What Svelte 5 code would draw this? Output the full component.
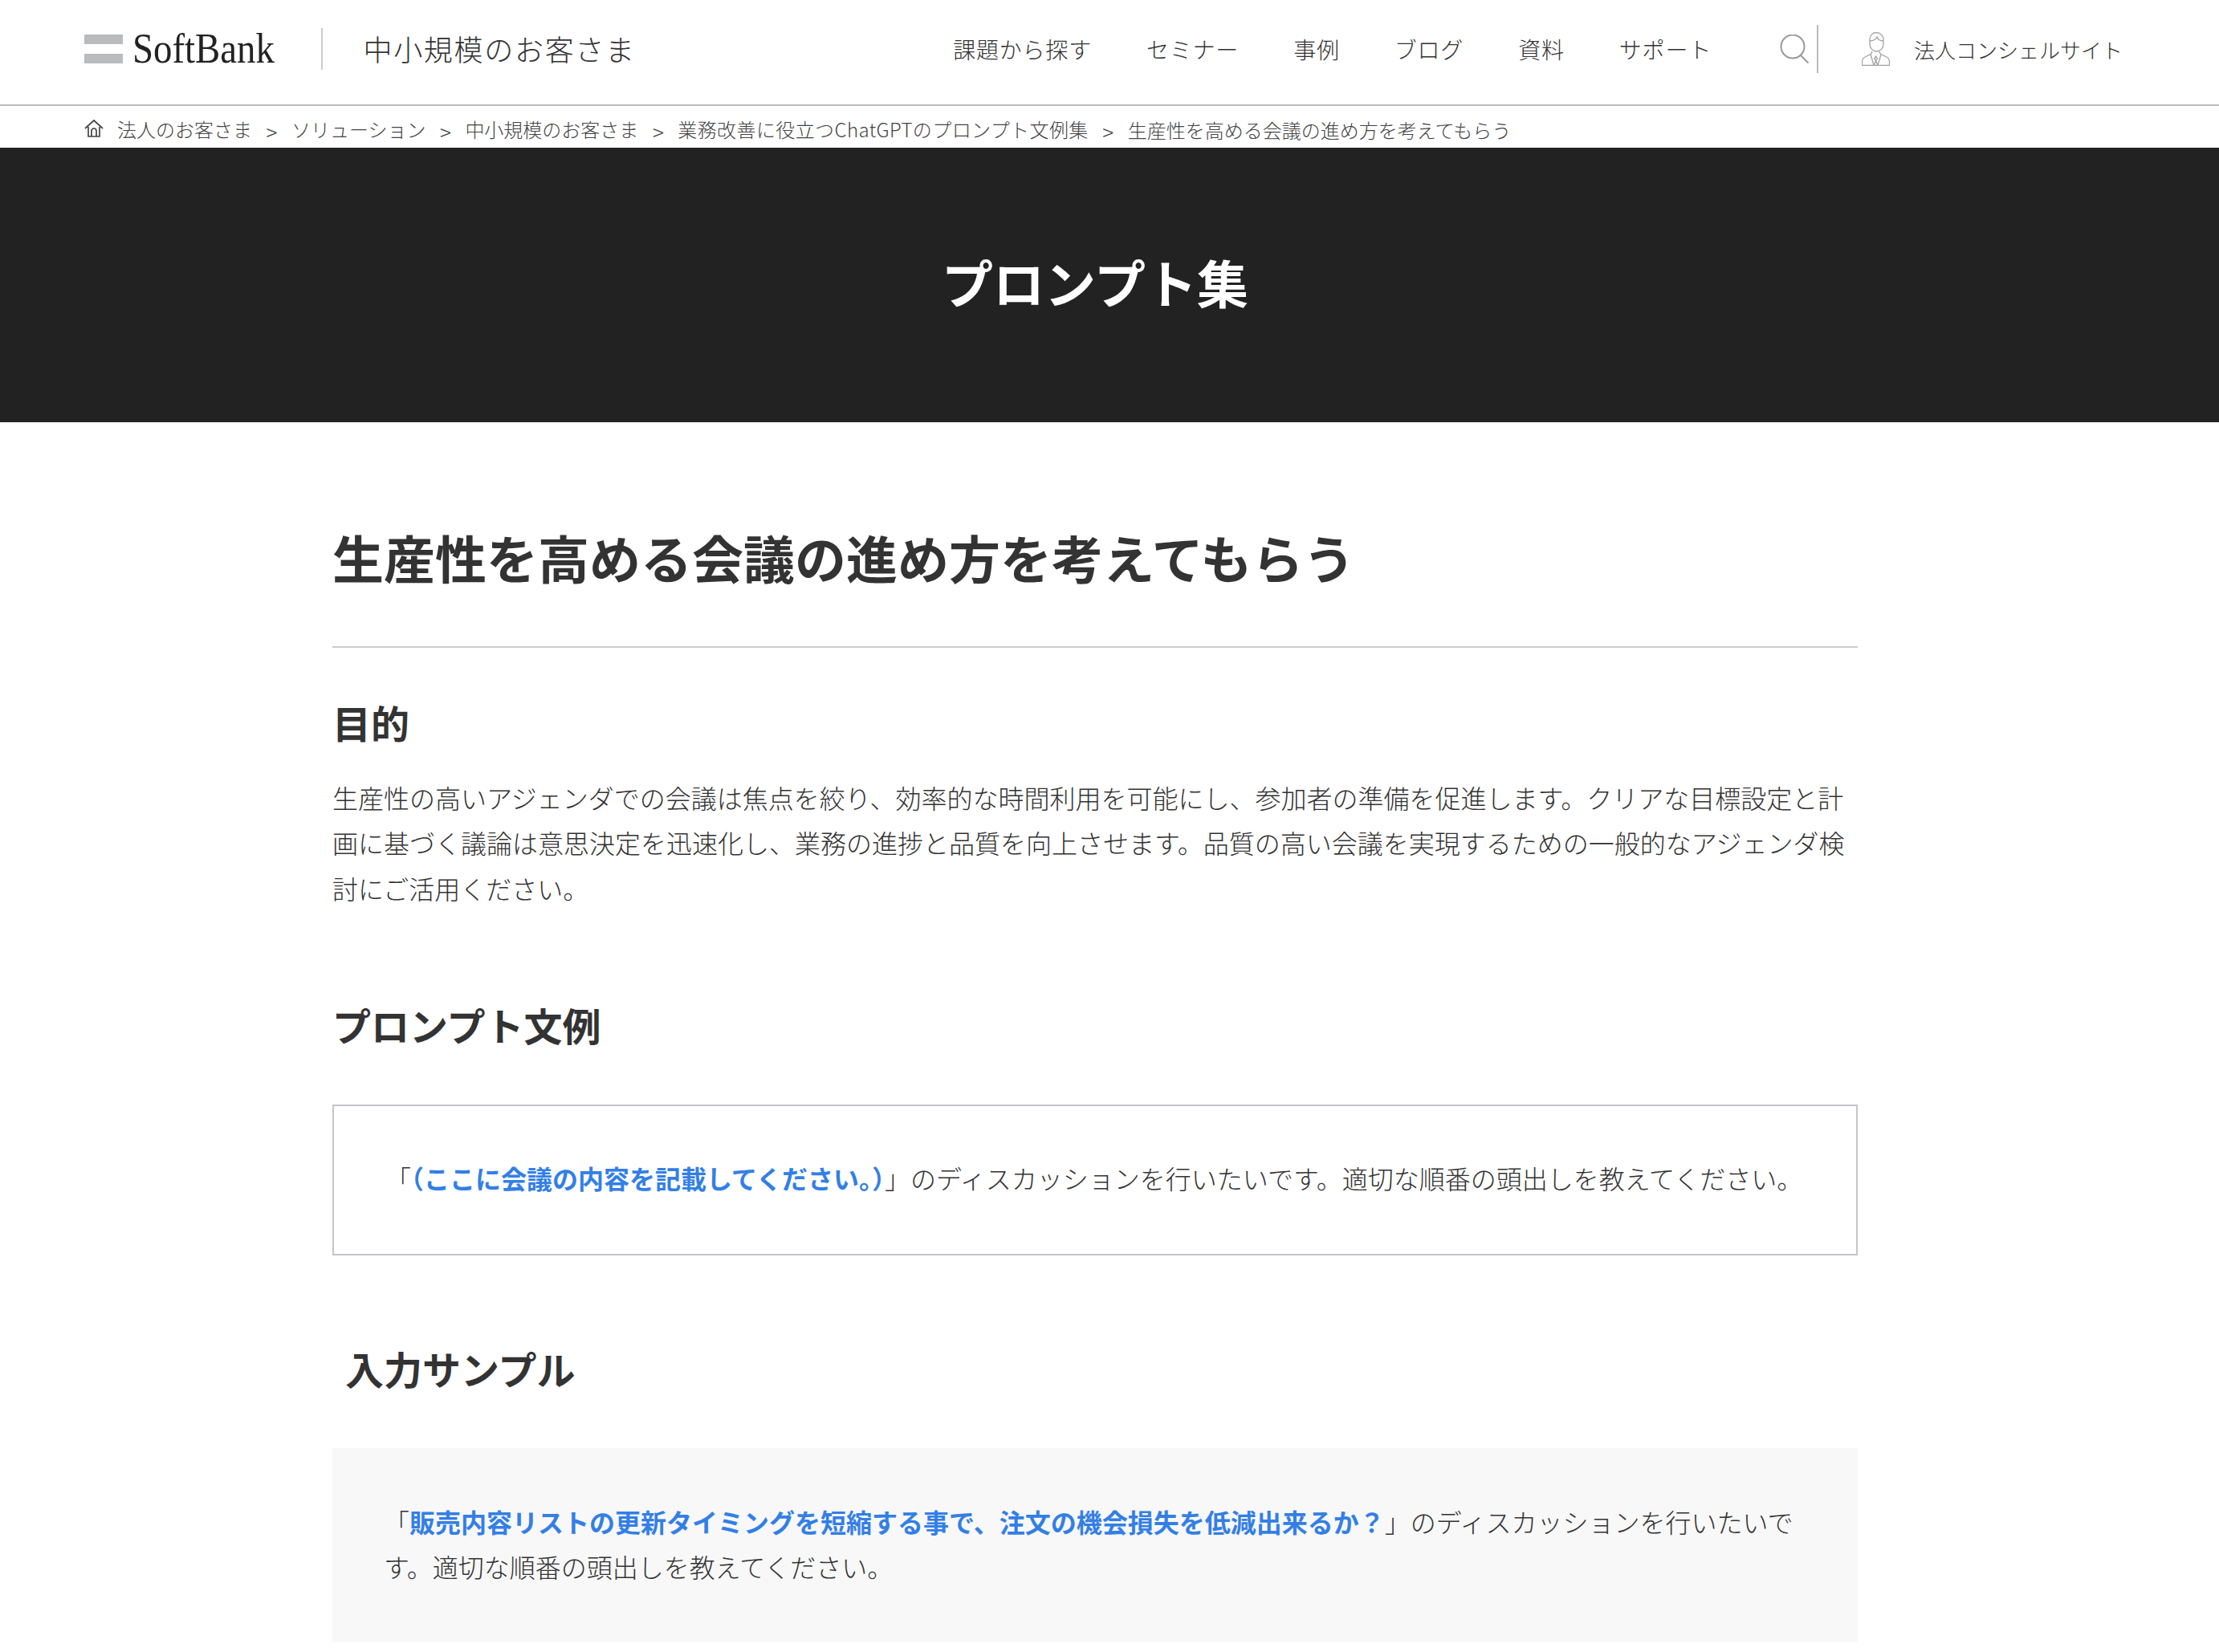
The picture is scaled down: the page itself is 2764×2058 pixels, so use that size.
<script lang="ts">
	const nav = ['課題から探す', 'セミナー', '事例', 'ブログ', '資料', 'サポート'];
	const crumbs = ['法人のお客さま', 'ソリューション', '中小規模のお客さま', '業務改善に役立つChatGPTのプロンプト文例集'];
</script>

<header class="site-header">
	<div class="brand">
		<a class="logo" href="#top">
			<span class="bars"><i></i><i></i></span>
			<span class="wordmark">SoftBank</span>
		</a>
		<span class="segment">中小規模のお客さま</span>
	</div>
	<nav class="global-nav">
		{#each nav as item}
			<a href="#top">{item}</a>
		{/each}
	</nav>
	<div class="tools">
		<button class="search" aria-label="検索">
			<svg width="37" height="36" viewBox="0 0 37 36" fill="none" stroke="#999" stroke-width="2">
				<circle cx="16" cy="15" r="14.5" />
				<path d="M26 26 35.500 35.500" />
			</svg>
		</button>
		<a class="concierge" href="#top">
			<svg width="35" height="42" viewBox="0 0 35 42" fill="none" stroke="#a3a3a3" stroke-width="1.3">
				<path d="M10 9c0-5 4-8.500 8-8.500S27 4 27 9v6c0 5-4 9-8.500 9S10 20 10 15z" />
				<path d="M10 11c3 0 7-1 9-5 1 3 4 5 8 5" />
				<path d="M13 24l-1 3-8 4c-2 1-3.500 3-3.500 6v4.500h34V37c0-3-1.500-5-3.500-6l-8-4-1-3" />
				<path d="M17.500 30l-2 3 2 2 2-2zM15.500 41l2-6 2 6M11 28l4 13M24 28l-4 13" />
			</svg>
			<span>法人コンシェルサイト</span>
		</a>
	</div>
</header>

<ol class="breadcrumb">
	<li class="home">
		<svg width="24" height="24" viewBox="0 0 24 24" fill="none" stroke="#444" stroke-width="1.7">
			<path d="M1 12 12 2l11 10M5 10v12h14V10M9 22v-7a3 3 0 0 1 6 0v7" />
		</svg>
	</li>
	{#each crumbs as crumb}
		<li><a href="#top">{crumb}</a><span class="sep">&gt;</span></li>
	{/each}
	<li class="current">生産性を高める会議の進め方を考えてもらう</li>
</ol>

<section class="hero">
	<p>プロンプト集</p>
</section>

<main class="content">
	<h1>生産性を高める会議の進め方を考えてもらう</h1>

	<h2 class="purpose">目的</h2>
	<p class="lead">生産性の高いアジェンダでの会議は焦点を絞り、効率的な時間利用を可能にし、参加者の準備を促進します。クリアな目標設定と計画に基づく議論は意思決定を迅速化し、業務の進捗と品質を向上させます。品質の高い会議を実現するための一般的なアジェンダ検討にご活用ください。</p>

	<h2 class="prompt-title">プロンプト文例</h2>
	<div class="box outlined">
		「<strong>（ここに会議の内容を記載してください。）</strong>」のディスカッションを行いたいです。適切な順番の頭出しを教えてください。
	</div>

	<h2 class="sample-title">入力サンプル</h2>
	<div class="box filled">
		「<strong>販売内容リストの更新タイミングを短縮する事で、注文の機会損失を低減出来るか？</strong>」のディスカッションを行いたいです。適切な順番の頭出しを教えてください。
	</div>
</main>

<style>
	:global(body) {
		margin: 0;
		background: #fff;
		color: #333;
		font-family: 'Noto Sans CJK JP', 'Noto Sans', sans-serif;
		font-weight: 300;
	}

	a {
		color: inherit;
		text-decoration: none;
	}

	.site-header {
		display: flex;
		align-items: center;
		height: 122px;
		padding: 0 120px 8px 105px;
		border-bottom: 2px solid #bbb;
		box-sizing: content-box;
	}

	.brand {
		display: flex;
		align-items: center;
	}

	.logo {
		display: flex;
		align-items: center;
		gap: 12px;
		padding-right: 58px;
		height: 52px;
		border-right: 2px solid #ccc;
	}

	.bars {
		display: flex;
		flex-direction: column;
		gap: 12px;
		width: 48px;
	}

	.bars i {
		display: block;
		height: 12px;
		background: #b9bbbd;
	}

	.wordmark {
		margin-right: -19px;
		font-family: 'Liberation Serif', serif;
		font-size: 52px;
		font-weight: 400;
		line-height: 52px;
		color: #222;
		transform: scaleX(0.9);
		transform-origin: left center;
	}

	.segment {
		margin: 0 0 2px 50px;
		font-size: 36px;
		letter-spacing: 1.7px;
		color: #333;
	}

	.global-nav {
		display: flex;
		gap: 68px;
		margin-left: auto;
		font-size: 28px;
		letter-spacing: 0.8px;
		color: #333;
	}

	.tools {
		display: flex;
		align-items: center;
		margin-left: 85px;
	}

	.search {
		display: flex;
		align-items: center;
		height: 60px;
		padding: 0 9px 0 0;
		background: none;
		border: 0;
		border-right: 2px solid #bbb;
	}

	.concierge {
		display: flex;
		align-items: center;
		gap: 30px;
		margin-left: 54px;
		font-size: 26px;
		color: #333;
	}

	.breadcrumb {
		display: flex;
		align-items: center;
		height: 52px;
		margin: 0;
		padding: 4px 0 0 105px;
		list-style: none;
		font-size: 24px;
		color: #444;
		box-sizing: border-box;
	}

	.breadcrumb li {
		display: flex;
		align-items: center;
	}

	.breadcrumb li:nth-child(5) a {
		letter-spacing: 0.4px;
	}

	.home {
		margin-right: 17px;
	}

	.sep {
		margin: 8px 17.5px 0;
		font-size: 26px;
		line-height: 26px;
	}

	.current {
		margin-top: 2px;
	}

	.hero {
		display: flex;
		align-items: center;
		justify-content: center;
		height: 342px;
		padding: 0 36px 10px 0;
		background: #222;
		box-sizing: border-box;
	}

	.hero p {
		margin: 0;
		font-size: 64px;
		font-weight: 700;
		color: #fff;
	}

	.content {
		width: 1900px;
		margin-left: 414px;
	}

	h1 {
		margin: 0;
		padding: 119px 0 64px;
		font-size: 64px;
		font-weight: 700;
		line-height: 96px;
		border-bottom: 2px solid #ccc;
	}

	h2 {
		margin: 0;
		font-size: 48px;
		font-weight: 700;
		line-height: 72px;
	}

	.purpose {
		margin-top: 56px;
	}

	.lead {
		margin: 30px 0 0;
		font-size: 32px;
		line-height: 56.4px;
		color: #333;
	}

	.prompt-title {
		margin-top: 106px;
	}

	.sample-title {
		margin-top: 104px;
		padding-left: 16px;
	}

	.box {
		margin-top: 64px;
		padding: 61px 64px 66px;
		font-size: 32px;
		line-height: 56.4px;
		color: #333;
		box-sizing: border-box;
	}

	.box strong {
		font-weight: 700;
		color: #337fe6;
	}

	.outlined {
		border: 2px solid #c2c6ca;
	}

	.filled {
		padding-top: 63px;
		padding-bottom: 67px;
		background: #f8f8f8;
	}
</style>
